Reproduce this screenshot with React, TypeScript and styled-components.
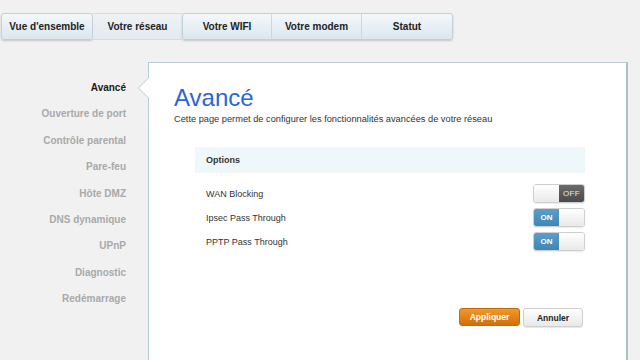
import React from "react";
import styled, { createGlobalStyle, css } from "styled-components";

const GlobalStyle = createGlobalStyle`
  html, body { margin: 0; padding: 0; }
  body {
    background: #f1f1f1;
    font-family: "Liberation Sans", Arial, Helvetica, sans-serif;
    color: #222;
  }
`;

const Page = styled.div`
  width: 640px;
  height: 360px;
  overflow: hidden;
`;

const NavBar = styled.nav`
  display: flex;
  margin: 13px 0 0 1px;
  height: 27px;
`;

const NavGroup = styled.div`
  display: flex;
  border: 1px solid #c3d0d9;
  border-radius: 3px;
  background: linear-gradient(#f3f8fb, #dce7ef);
  box-shadow: 0 1px 2px rgba(0, 0, 0, 0.18);
`;

const Tab = styled.div<{ $w: number; $sep?: boolean }>`
  width: ${(p) => p.$w}px;
  display: flex;
  align-items: center;
  justify-content: center;
  font-size: 10px;
  font-weight: bold;
  color: #222;
  ${(p) =>
    p.$sep &&
    css`
      border-left: 1px solid #ccd8e0;
    `}
`;

const SelectedTab = styled.div`
  width: 89px;
  display: flex;
  align-items: center;
  justify-content: center;
  font-size: 10px;
  font-weight: bold;
  color: #222;
  background: linear-gradient(#eef2f5, #e4eaef);
  border-top: 1px solid #d3dce2;
  border-bottom: 1px solid #d3dce2;
`;

const Main = styled.div`
  display: flex;
  margin-top: 22px;
`;

const Sidebar = styled.ul`
  flex-shrink: 0;
  width: 126px;
  padding: 13px 22px 0 0;
  margin: 0;
  list-style: none;
  text-align: right;
`;

const SideItem = styled.li<{ $active?: boolean }>`
  height: 26.375px;
  line-height: 26px;
  font-size: 10px;
  font-weight: bold;
  color: ${(p) => (p.$active ? "#1a1a1a" : "#a9a9a9")};
`;

const Panel = styled.section`
  position: relative;
  flex-shrink: 0;
  width: 452px;
  height: 320px;
  background: #fff;
  border: 1px solid #b7cdd3;
  border-right: 2px solid #a9c2c9;
  padding-left: 25px;
  box-sizing: content-box;

  &::before,
  &::after {
    content: "";
    position: absolute;
    top: 14px;
    left: -11px;
    border-style: solid;
    border-width: 11px 11px 11px 0;
    border-color: transparent #b7cdd3 transparent transparent;
  }
  &::after {
    left: -10px;
    border-color: transparent #fff transparent transparent;
  }
`;

const Title = styled.h1`
  margin: 22px 0 0;
  font-size: 24px;
  line-height: 25px;
  font-weight: normal;
  color: #2d62e0;
`;

const Description = styled.p`
  margin: 3px 0 0;
  font-size: 9.25px;
  line-height: 12px;
  color: #333;
`;

const Section = styled.div`
  margin: 22px 41px 0 21px;
`;

const SectionHeader = styled.div`
  height: 26px;
  display: flex;
  align-items: center;
  padding-left: 11px;
  background: #eef8fa;
  font-size: 9px;
  font-weight: bold;
  color: #333;
`;

const Rows = styled.div`
  display: flex;
  flex-direction: column;
  gap: 5px;
  margin-top: 11px;
`;

const Row = styled.div`
  display: flex;
  align-items: center;
  justify-content: space-between;
  height: 19px;
  padding-left: 11px;
  font-size: 9px;
  color: #333;
`;

const Switch = styled.div`
  width: 52px;
  height: 19px;
  display: flex;
  border: 1px solid #cfcfcf;
  border-radius: 3px;
  overflow: hidden;
  box-sizing: border-box;
  box-shadow: 0 1px 1px rgba(0, 0, 0, 0.08);
`;

const Knob = styled.div`
  flex: 1;
  background: linear-gradient(#ffffff, #e9e9e9);
`;

const SwitchLabel = styled.div<{ $on: boolean }>`
  flex: 1;
  display: flex;
  align-items: center;
  justify-content: center;
  font-size: 8px;
  font-weight: bold;
  color: ${(p) => (p.$on ? "#fff" : "#e6e6e6")};
  background: ${(p) =>
    p.$on
      ? "linear-gradient(#5a9fc8, #3f86b3)"
      : "linear-gradient(#6b6b6b, #4a4a4a)"};
  ${(p) =>
    !p.$on &&
    css`
      font-weight: normal;
      letter-spacing: 0.3px;
    `}
`;

const Actions = styled.div`
  display: flex;
  justify-content: flex-end;
  align-items: flex-start;
  gap: 3px;
  margin-top: 57px;
  margin-right: 2px;
`;

const Button = styled.button<{ $primary?: boolean }>`
  height: 19px;
  padding: 0;
  font-family: inherit;
  font-size: 8.5px;
  font-weight: bold;
  border-radius: 3px;
  cursor: pointer;
  ${(p) =>
    p.$primary
      ? css`
          width: 61px;
          height: 18px;
          color: #fff;
          border: 1px solid #c36a08;
          background: linear-gradient(#ef9a2a, #d36f05);
        `
      : css`
          width: 60px;
          color: #222;
          border: 1px solid #cfcfcf;
          background: linear-gradient(#ffffff, #e8e8e8);
          box-shadow: 0 1px 1px rgba(0, 0, 0, 0.1);
        `}
`;

const ToggleSwitch: React.FC<{ on: boolean }> = ({ on }) => (
  <Switch>
    {on ? (
      <>
        <SwitchLabel $on>ON</SwitchLabel>
        <Knob />
      </>
    ) : (
      <>
        <Knob />
        <SwitchLabel $on={false}>OFF</SwitchLabel>
      </>
    )}
  </Switch>
);

const sideItems = [
  "Avancé",
  "Ouverture de port",
  "Contrôle parental",
  "Pare-feu",
  "Hôte DMZ",
  "DNS dynamique",
  "UPnP",
  "Diagnostic",
  "Redémarrage",
];

const options = [
  { label: "WAN Blocking", on: false },
  { label: "Ipsec Pass Through", on: true },
  { label: "PPTP Pass Through", on: true },
];

export default function App() {
  return (
    <Page>
      <GlobalStyle />
      <NavBar>
        <NavGroup>
          <Tab $w={90}>Vue d'ensemble</Tab>
        </NavGroup>
        <SelectedTab>Votre réseau</SelectedTab>
        <NavGroup>
          <Tab $w={88}>Votre WIFI</Tab>
          <Tab $w={89} $sep>
            Votre modem
          </Tab>
          <Tab $w={90} $sep>
            Statut
          </Tab>
        </NavGroup>
      </NavBar>
      <Main>
        <Sidebar>
          {sideItems.map((s, i) => (
            <SideItem key={s} $active={i === 0}>
              {s}
            </SideItem>
          ))}
        </Sidebar>
        <Panel>
          <Title>Avancé</Title>
          <Description>
            Cette page permet de configurer les fonctionnalités avancées de votre réseau
          </Description>
          <Section>
            <SectionHeader>Options</SectionHeader>
            <Rows>
              {options.map((o) => (
                <Row key={o.label}>
                  <span>{o.label}</span>
                  <ToggleSwitch on={o.on} />
                </Row>
              ))}
            </Rows>
            <Actions>
              <Button $primary>Appliquer</Button>
              <Button>Annuler</Button>
            </Actions>
          </Section>
        </Panel>
      </Main>
    </Page>
  );
}
